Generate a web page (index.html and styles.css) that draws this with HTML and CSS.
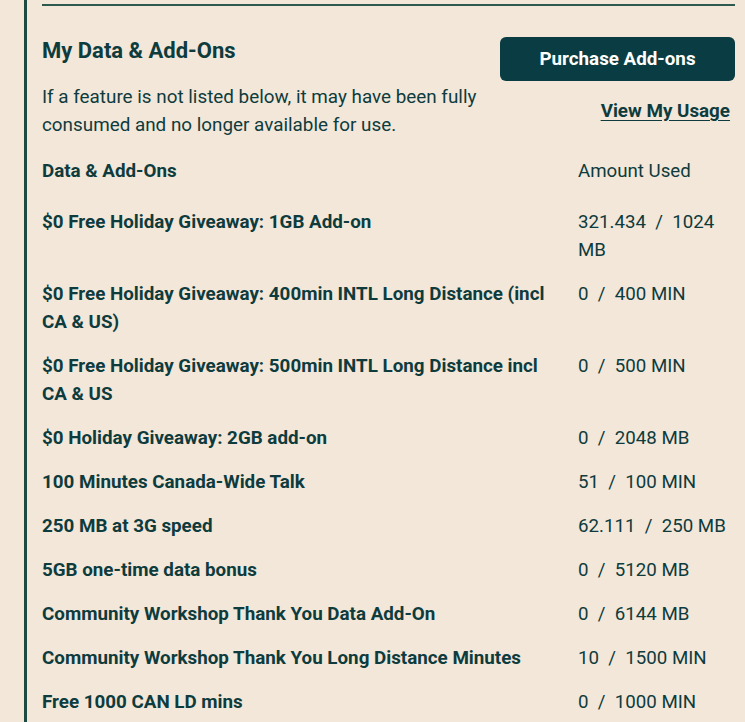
FILE: index.html
```html
<!DOCTYPE html>
<html>
<head>
<meta charset="utf-8">
<link rel="stylesheet" href="styles.css">
</head>
<body>
<div class="rail">
  <div class="section">
    <div class="top">
      <div class="intro">
        <h2 class="title">My Data &amp; Add-Ons</h2>
        <p class="note">If a feature is not listed below, it may have been fully consumed and no longer available for use.</p>
      </div>
      <div class="actions">
        <button class="btn">Purchase Add-ons</button>
        <a class="usage" href="#">View My Usage</a>
      </div>
    </div>
    <div class="table">
      <div class="row head"><div class="name">Data &amp; Add-Ons</div><div class="val">Amount Used</div></div>
      <div class="row"><div class="name">$0 Free Holiday Giveaway: 1GB Add-on</div><div class="val">321.434&nbsp; /&nbsp; 1024 MB</div></div>
      <div class="row"><div class="name">$0 Free Holiday Giveaway: 400min INTL Long Distance (incl CA &amp; US)</div><div class="val">0&nbsp; /&nbsp; 400 MIN</div></div>
      <div class="row"><div class="name">$0 Free Holiday Giveaway: 500min INTL Long Distance incl CA &amp; US</div><div class="val">0&nbsp; /&nbsp; 500 MIN</div></div>
      <div class="row"><div class="name">$0 Holiday Giveaway: 2GB add-on</div><div class="val">0&nbsp; /&nbsp; 2048 MB</div></div>
      <div class="row"><div class="name">100 Minutes Canada-Wide Talk</div><div class="val">51&nbsp; /&nbsp; 100 MIN</div></div>
      <div class="row"><div class="name">250 MB at 3G speed</div><div class="val">62.111&nbsp; /&nbsp; 250 MB</div></div>
      <div class="row"><div class="name">5GB one-time data bonus</div><div class="val">0&nbsp; /&nbsp; 5120 MB</div></div>
      <div class="row"><div class="name">Community Workshop Thank You Data Add-On</div><div class="val">0&nbsp; /&nbsp; 6144 MB</div></div>
      <div class="row"><div class="name">Community Workshop Thank You Long Distance Minutes</div><div class="val">10&nbsp; /&nbsp; 1500 MIN</div></div>
      <div class="row"><div class="name">Free 1000 CAN LD mins</div><div class="val">0&nbsp; /&nbsp; 1000 MIN</div></div>
    </div>
  </div>
</div>
</body>
</html>
```
FILE: styles.css
```css
html, body {
  margin: 0;
  padding: 0;
  background: #f2e7d9;
}
body {
  font-family: Roboto, "Liberation Sans", sans-serif;
  color: #0e3b3d;
  overflow: hidden;
  height: 722px;
}
.rail {
  margin-left: 24px;
  border-left: 3px solid #1d4a42;
  padding: 4px 10px 0 15px;
  min-height: 722px;
  box-sizing: border-box;
}
.section {
  border-top: 2px solid #2c5a4d;
}
.top {
  display: flex;
  justify-content: space-between;
  align-items: flex-start;
  padding-top: 31px;
}
.intro {
  width: 450px;
}
.title {
  margin: 0;
  font-size: 22px;
  line-height: 28px;
  font-weight: 700;
}
.note {
  margin: 18px 0 0;
  font-size: 18.85px;
  line-height: 28px;
}
.actions {
  display: flex;
  flex-direction: column;
  align-items: flex-end;
}
.btn {
  width: 235px;
  height: 44px;
  border: none;
  border-radius: 6px;
  background: #0a3d43;
  color: #fff;
  font-family: Roboto, "Liberation Sans", sans-serif;
  font-size: 18.8px;
  font-weight: 700;
  cursor: pointer;
}
.usage {
  margin-top: 16px;
  margin-right: 5px;
  color: #0e3b3d;
  font-size: 18.8px;
  font-weight: 700;
  line-height: 28px;
  text-decoration: underline;
  text-underline-offset: 3px;
}
.table {
  margin-top: 10px;
}
.row {
  display: grid;
  grid-template-columns: 515px 157px;
  column-gap: 21px;
  padding: 8px 0;
  font-size: 18.7px;
  line-height: 28px;
}
.row.head {
  margin-bottom: 7px;
}
.name {
  font-weight: 700;
  font-size: 18.8px;
}
.head .val {
  font-weight: 400;
}
```
